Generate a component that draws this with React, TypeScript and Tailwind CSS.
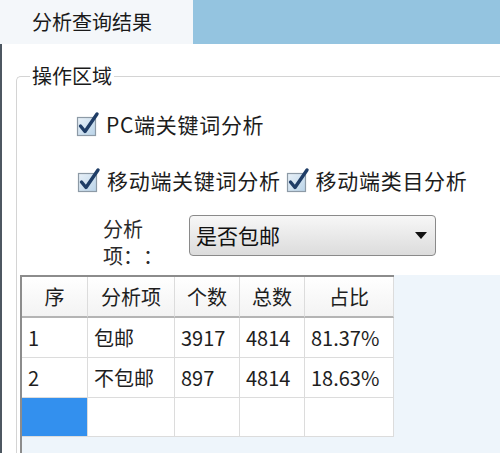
import React from 'react';

const font = { fontFamily: '"Noto Sans CJK SC", "Noto Sans", sans-serif' };

const CheckBox: React.FC = () => (
  <svg width="24" height="26" viewBox="0 0 24 26" className="shrink-0">
    <defs>
      <linearGradient id="cbg" x1="0" y1="0" x2="1" y2="1">
        <stop offset="0" stopColor="#e9f1f8" />
        <stop offset="1" stopColor="#b9d3e8" />
      </linearGradient>
    </defs>
    <rect x="1.5" y="6.5" width="18" height="18" fill="url(#cbg)" stroke="#8d9aa6" strokeWidth="1.2" />
    <path d="M4.5 15 L9 20.5 L21 3" fill="none" stroke="#1f3d66" strokeWidth="3.4" strokeLinecap="round" strokeLinejoin="round" />
  </svg>
);

const Check: React.FC<{ label: string }> = ({ label }) => (
  <div className="flex items-center gap-[6px]">
    <CheckBox />
    <span className="text-[21px] leading-[24px] tracking-[0.7px] text-[#1c1c1c]">{label}</span>
  </div>
);

const rows = [
  ['1', '包邮', '3917', '4814', '81.37%'],
  ['2', '不包邮', '897', '4814', '18.63%'],
];

export default function App() {
  return (
    <div className="w-[500px] h-[453px] overflow-hidden flex flex-col bg-white" style={font}>
      {/* Tab strip */}
      <div className="h-[44px] flex bg-[#94c4e0] shrink-0">
        <div className="w-[193px] bg-[#f4f7fa] flex items-center pl-[32px] text-[20px] text-[#1a1a1a]">
          分析查询结果
        </div>
      </div>

      {/* Body */}
      <div className="flex-1 border-l-2 border-[#4d5761] bg-white pl-[14px] pt-[32px]">
        <div className="h-full border-t border-l border-[#d4d4d4] rounded-tl-[5px] flex flex-col">
          <div className="-mt-[14px] ml-[13px] w-fit bg-white px-[2px] text-[20px] leading-[26px] text-[#1a1a1a]">
            操作区域
          </div>

          <div className="pt-[22px] pl-[59px]">
            <Check label="PC端关键词分析" />
          </div>

          <div className="mt-[30px] pl-[60px] flex items-center gap-[5px]">
            <Check label="移动端关键词分析" />
            <Check label="移动端类目分析" />
          </div>

          <div className="mt-[22px] pl-[86px] flex items-start gap-[40px]">
            <div className="w-[46px] text-[20px] leading-[27px] text-[#2a2a2a] [text-spacing-trim:space-all]">
              分析
              <br />
              项：：
            </div>
            <div className="w-[247px] h-[41px] rounded-[4px] border border-[#8a8a8a] bg-gradient-to-b from-[#f7f7f7] to-[#dcdcdc] flex items-center justify-between pl-[6px] pr-[8px]">
              <span className="text-[21px] text-[#111]">是否包邮</span>
              <svg width="12" height="8" viewBox="0 0 12 8">
                <path d="M0 0 H12 L6 7 Z" fill="#111" />
              </svg>
            </div>
          </div>

          {/* Grid panel */}
          <div className="mt-[6px] ml-[3px] flex-1 border-l-2 border-[#8c8c8c] bg-[#eef5fb]">
            <div className="w-[372px] border-t-2 border-[#8c8c8c] bg-white grid grid-cols-[66px_87px_65px_65px_89px] text-[20px] text-[#1e1e1e]">
              {['序', '分析项', '个数', '总数', '占比'].map((h) => (
                <div
                  key={h}
                  className="h-[41px] flex items-center justify-center border-r border-b-2 border-r-[#dcdcdc] border-b-[#b4b4b4] bg-gradient-to-b from-[#ffffff] to-[#f3f3f3]"
                >
                  {h}
                </div>
              ))}
              {rows.map((r) =>
                r.map((c, i) => (
                  <div
                    key={r[0] + i}
                    className="h-[40px] flex items-center pl-[6px] border-r border-b border-[#dcdcdc]"
                  >
                    {c}
                  </div>
                ))
              )}
              {[0, 1, 2, 3, 4].map((i) => (
                <div
                  key={'e' + i}
                  className={
                    i === 0
                      ? 'h-[39px] bg-[#3390ee] border-r border-b border-[#dcdcdc]'
                      : 'h-[39px] border-r border-b border-[#dcdcdc]'
                  }
                />
              ))}
            </div>
          </div>
        </div>
      </div>
    </div>
  );
}
